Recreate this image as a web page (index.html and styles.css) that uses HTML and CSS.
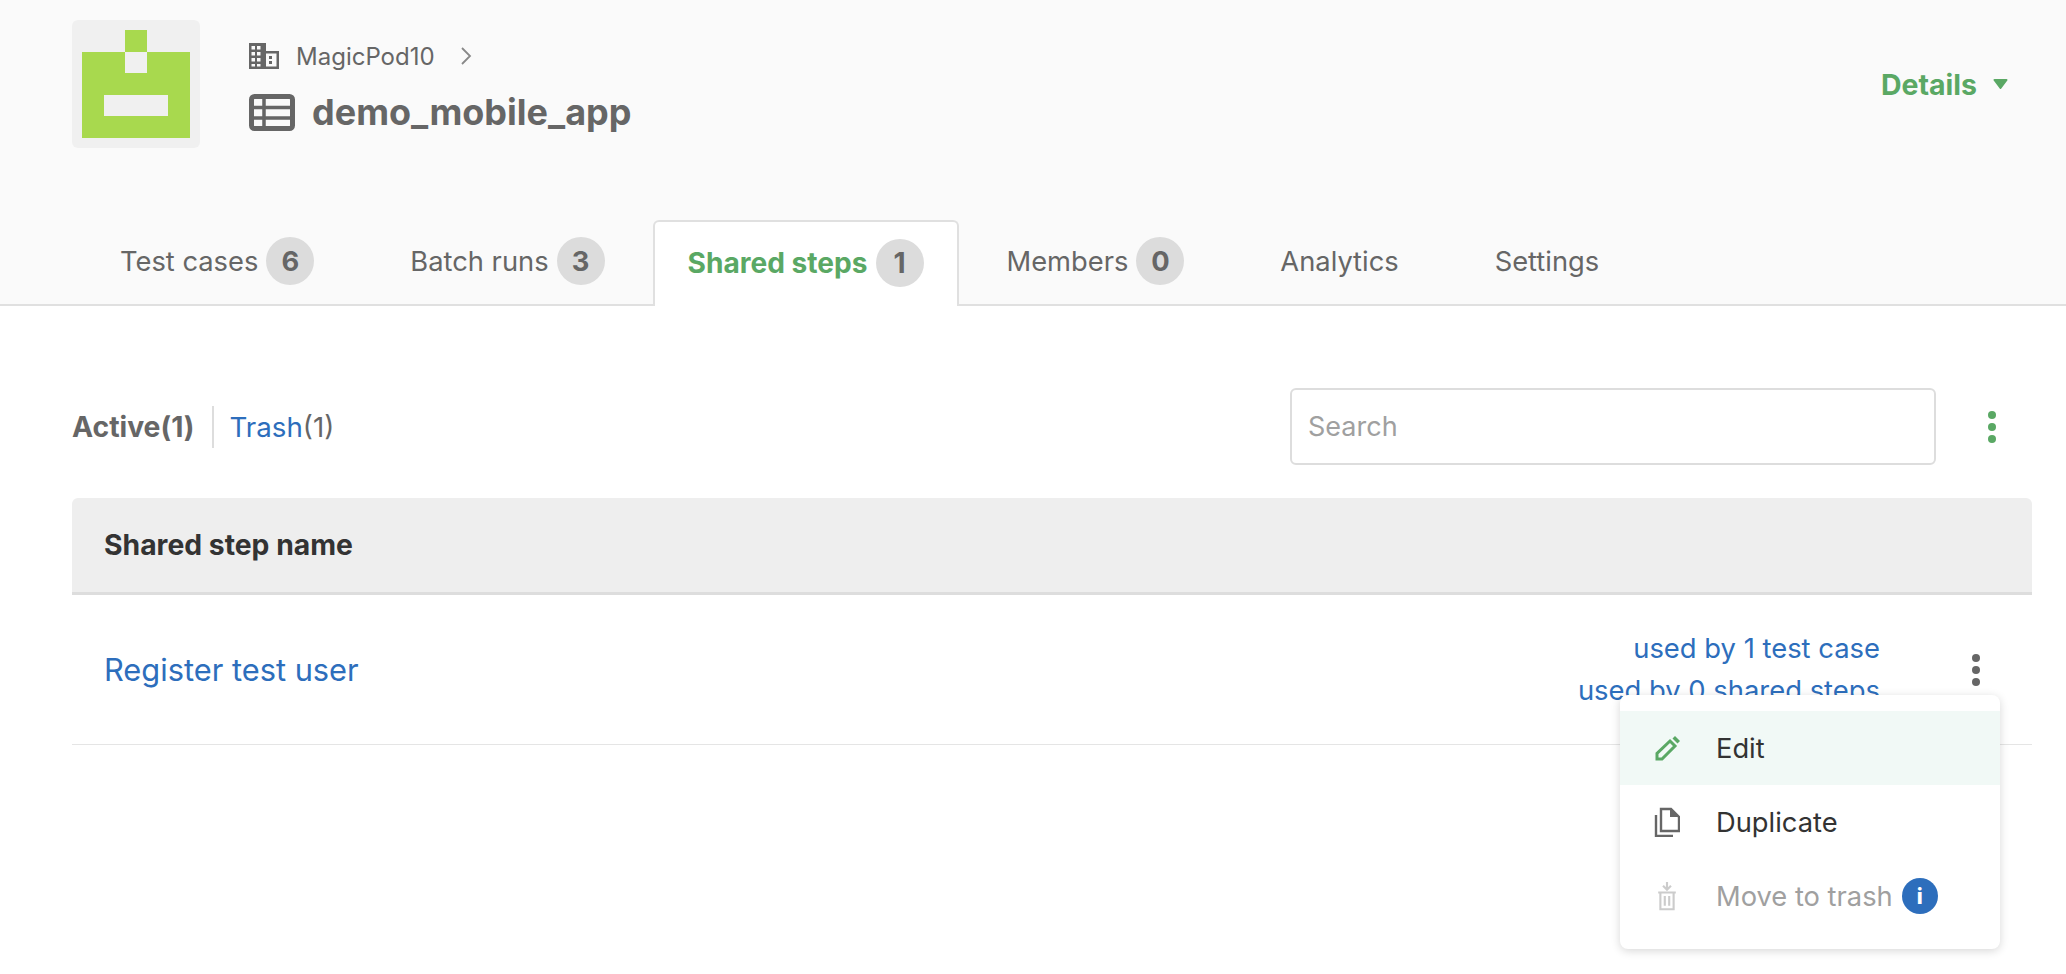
FILE: index.html
```html
<!DOCTYPE html>
<html lang="en">
<head>
<meta charset="utf-8">
<title>demo_mobile_app - Shared steps</title>
<link rel="stylesheet" href="styles.css">
</head>
<body>
<header class="top">
  <div class="hero">
    <svg class="logo" viewBox="0 0 128 128" aria-hidden="true">
      <rect width="128" height="128" rx="6" fill="#f0f0f0"/>
      <path fill="#a8d94e" d="M10 32h43V10h22v22h43v86H10z"/>
      <rect x="53" y="32" width="22" height="21" fill="#f0f0f0"/>
      <rect x="32" y="75" width="64" height="21" fill="#f0f0f0"/>
    </svg>
    <div class="titles">
      <div class="org">
        <svg class="org-icon" viewBox="0 0 30 26" aria-hidden="true">
          <path fill="#666" fill-rule="evenodd" d="M0 0h17v8h13v18H0zM2.500 3v3.500H6V3zm5.500 0v3.500h3.500V3zM2.500 9v3.500H6V9zM8 9v3.500h3.500V9zm-5.500 6v3.500H6V15zM8 15v3.500h3.500V15zm-5.500 6v2.500H6V21zM8 21v2.500h3.500V21zm9-10.500v13h10.500v-13zm3 2.500h3v3h-3zm0 5h3v3h-3z"/>
        </svg>
        <span class="org-name">MagicPod10</span>
        <svg class="chev" viewBox="0 0 12 18" aria-hidden="true"><path d="M2 1l8 8-8 8" fill="none" stroke="#888" stroke-width="1.800"/></svg>
      </div>
      <h1 class="project">
        <svg class="table-icon" viewBox="0 0 46 37" aria-hidden="true">
          <rect x="2.500" y="2.500" width="41" height="32" rx="3" fill="none" stroke="#666" stroke-width="5"/>
          <path d="M2 13.500h42M2 24h42M15 3v31" stroke="#666" stroke-width="3.500" fill="none"/>
        </svg>
        <span>demo_mobile_app</span>
      </h1>
    </div>
    <div class="details">Details
      <svg class="caret" viewBox="0 0 15 10" aria-hidden="true"><path d="M1.500 1h12L7.500 9z" fill="#5aa864" stroke="#5aa864" stroke-width="2" stroke-linejoin="round"/></svg>
    </div>
  </div>
  <nav class="tabs">
    <a class="tab">Test cases<span class="badge">6</span></a>
    <a class="tab">Batch runs<span class="badge">3</span></a>
    <a class="tab active">Shared steps<span class="badge">1</span></a>
    <a class="tab">Members<span class="badge">0</span></a>
    <a class="tab">Analytics</a>
    <a class="tab">Settings</a>
  </nav>
</header>
<main class="content">
  <div class="toolbar">
    <div class="filter">
      <strong class="filter-active">Active(1)</strong>
      <span class="filter-trash"><a class="link">Trash</a>(1)</span>
    </div>
    <div class="tools">
      <div class="search">Search</div>
      <span class="dots green"><i></i><i></i><i></i></span>
    </div>
  </div>
  <section class="table">
    <div class="thead">Shared step name</div>
    <div class="row">
      <a class="link name">Register test user</a>
      <div class="usage">
        <a class="link">used by 1 test case</a>
        <a class="link">used by 0 shared steps</a>
      </div>
      <span class="dots"><i></i><i></i><i></i></span>
      <div class="menu">
        <div class="item hover">
          <svg class="item-icon" viewBox="0 0 26 30" aria-hidden="true">
            <path d="M3 26v-5.500L16 8l5 5L8 26z" fill="none" stroke="#5aa864" stroke-width="3"/>
            <path d="M18.500 5.500L21 3l5 5-2.500 2.500z" fill="#5aa864"/>
          </svg>
          <span>Edit</span>
        </div>
        <div class="item">
          <svg class="item-icon" viewBox="0 0 26 30" aria-hidden="true">
            <path d="M7 2h10l8 8v14H7z" fill="none" stroke="#666" stroke-width="2.400"/>
            <path d="M16 1l9 9h-9z" fill="#666"/>
            <path d="M2 8v21h17" fill="none" stroke="#666" stroke-width="2.400"/>
          </svg>
          <span>Duplicate</span>
        </div>
        <div class="item disabled">
          <svg class="item-icon" viewBox="0 0 26 34" aria-hidden="true">
            <path d="M13 1v8M8.500 5.500L13 10l4.500-4.500" fill="none" stroke="#ccc" stroke-width="2.400"/>
            <path d="M3 13h20M5.500 13v19h15V13M10.500 17v11M15.500 17v11" fill="none" stroke="#ccc" stroke-width="2.400"/>
          </svg>
          <span>Move to trash</span>
          <span class="info">i</span>
        </div>
      </div>
    </div>
  </section>
</main>
</body>
</html>
```
FILE: styles.css
```css
* { box-sizing: border-box; }
html, body { margin: 0; height: 100%; }
body {
  font-family: Inter, "Liberation Sans", sans-serif;
  color: #666;
  background: #fff;
  overflow: hidden;
}
.top {
  height: 306px;
  background: #fafafa;
  border-bottom: 2px solid #e0e0e0;
  display: flex;
  flex-direction: column;
  justify-content: space-between;
}
.hero {
  display: flex;
  padding: 20px 58px 0 72px;
}
.logo { width: 128px; height: 128px; flex: none; }
.titles { margin-left: 49px; padding-top: 18px; }
.org { display: flex; align-items: center; height: 36px; }
.org-icon { width: 30px; height: 26px; }
.org-name { margin-left: 17px; font-size: 24px; }
.chev { width: 12px; height: 18px; margin-left: 25px; }
.project {
  display: flex;
  align-items: center;
  margin: 16px 0 0;
  font-size: 36px;
  font-weight: 700;
  line-height: 44px;
}
.table-icon { width: 46px; height: 37px; margin-right: 17px; }
.details {
  margin-left: auto;
  margin-top: 46px;
  font-size: 28.500px;
  font-weight: 700;
  color: #5aa864;
  display: flex;
  align-items: center;
  height: 36px;
}
.caret { width: 15px; height: 10px; margin-left: 16px; }
.tabs { display: flex; padding-left: 72px; height: 86px; margin-bottom: -2px; }
.tab {
  display: flex;
  align-items: center;
  padding: 0 48px 4px;
  font-size: 27.300px;
  color: #666;
}
.tab.active {
  padding: 0 33px 3px;
  background: #fff;
  border: 2px solid #e0e0e0;
  border-bottom: 0;
  border-radius: 6px 6px 0 0;
  color: #5aa864;
  font-size: 28.100px;
  font-weight: 700;
}
.badge {
  display: flex;
  align-items: center;
  justify-content: center;
  width: 48px;
  height: 48px;
  margin-left: 8px;
  border-radius: 50%;
  background: #dcdcdc;
  color: #666;
  font-weight: 700;
}
.content { padding: 0 34px 0 72px; }
.toolbar {
  display: flex;
  justify-content: space-between;
  align-items: center;
  padding-top: 83px;
  height: 158px;
  font-size: 27.700px;
}
.filter { display: flex; align-items: center; }
.filter-active { font-weight: 700; font-size: 28.300px; padding-right: 17px; }
.filter-trash {
  display: flex;
  align-items: center;
  height: 42px;
  padding-left: 16px;
  border-left: 2px solid #ddd;
}
.link { color: #2d6ebc; }
.tools { display: flex; align-items: center; }
.search {
  width: 646px;
  height: 77px;
  padding-left: 16px;
  display: flex;
  align-items: center;
  border: 2px solid #ddd;
  border-radius: 6px;
  color: #a0a0a0;
  font-size: 27px;
}
.dots {
  display: flex;
  flex-direction: column;
  gap: 4px;
  width: 8px;
}
.dots i { width: 8px; height: 8px; border-radius: 50%; background: #666; }
.dots.green { margin: 0 36px 0 52px; }
.dots.green i { background: #5aa864; }
.table { margin-top: 34px; }
.thead {
  height: 97px;
  padding-left: 32px;
  display: flex;
  align-items: center;
  background: #eee;
  border-bottom: 3px solid #ddd;
  border-radius: 6px 6px 0 0;
  font-size: 28.300px;
  font-weight: 700;
  color: #333;
}
.row {
  position: relative;
  display: flex;
  align-items: center;
  height: 150px;
  padding: 0 52px 0 32px;
  border-bottom: 1px solid #e5e5e5;
}
.name { font-size: 30.800px; }
.usage {
  margin-left: auto;
  display: flex;
  flex-direction: column;
  align-items: flex-end;
  font-size: 27.400px;
  line-height: 42px;
  padding-bottom: 1px;
}
.row > .dots { margin-left: 92px; margin-right: 0; }
.menu {
  position: absolute;
  top: 100px;
  right: 32px;
  width: 380px;
  height: 254px;
  padding: 16px 0;
  background: #fff;
  border-radius: 8px;
  box-shadow: 0 2px 10px rgba(0, 0, 0, 0.16);
}
.item {
  display: flex;
  align-items: center;
  height: 74px;
  padding-left: 34px;
  font-size: 27.300px;
  color: #333;
}
.item.hover { background: #f1f9f6; }
.item.disabled { color: #a0a0a0; }
.item-icon { width: 26px; height: 30px; margin-right: 36px; flex: none; }
.info {
  display: flex;
  align-items: center;
  justify-content: center;
  width: 36px;
  height: 36px;
  margin-left: 9px;
  border-radius: 50%;
  background: #2d6ebc;
  color: #fff;
  font-size: 21px;
  font-weight: 800;
}
```
